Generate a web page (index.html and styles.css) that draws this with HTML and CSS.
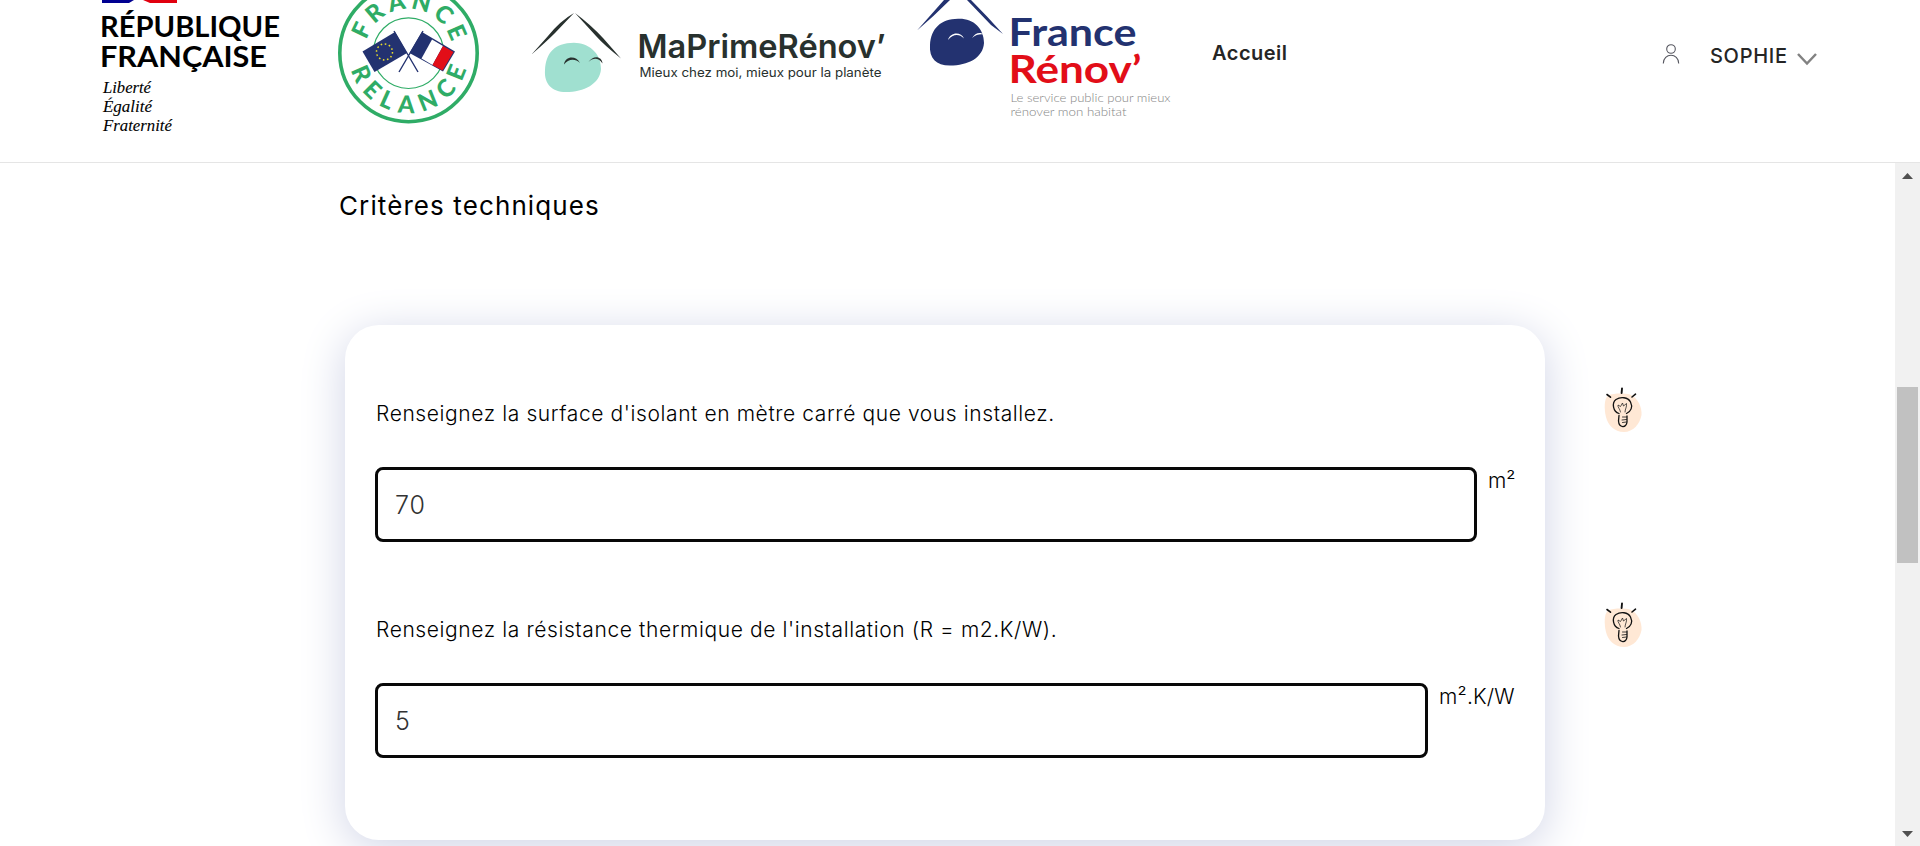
FILE: index.html
```html
<!DOCTYPE html>
<html lang="fr">
<head>
<meta charset="utf-8">
<title>MaPrimeRénov’ – Critères techniques</title>
<link rel="stylesheet" href="styles.css">
</head>
<body>
<header class="header">
  <svg class="logos" width="1180" height="162" viewBox="0 0 1180 162">
    <!-- République française -->
    <path d="M102 0H134L129 3H102Z" fill="#000091"/>
    <path d="M143 0H177V3H150Z" fill="#e1000f"/>
    <g class="marianne">
      <text x="100" y="37.300" textLength="180" lengthAdjust="spacingAndGlyphs">RÉPUBLIQUE</text>
      <text x="100" y="67" textLength="167" lengthAdjust="spacingAndGlyphs">FRANÇAISE</text>
    </g>
    <g class="motto">
      <text x="103" y="93" textLength="48" lengthAdjust="spacingAndGlyphs">Liberté</text>
      <text x="103" y="112" textLength="49" lengthAdjust="spacingAndGlyphs">Égalité</text>
      <text x="103" y="130.500" textLength="69" lengthAdjust="spacingAndGlyphs">Fraternité</text>
    </g>
    <!-- France Relance -->
    <defs>
      <path id="arc-top" d="M364.500 53A44 44 0 0 1 452.500 53"/>
      <path id="arc-bottom" d="M348.500 53A60 60 0 0 0 468.500 53"/>
    </defs>
    <circle cx="408.500" cy="53" r="68.700" fill="none" stroke="#2fac66" stroke-width="3.600"/>
    <circle cx="408.500" cy="53.200" r="35.300" fill="none" stroke="#2fac66" stroke-width="1.200"/>
    <g class="relance">
      <text><textPath href="#arc-top" startOffset="13" textLength="114">FRANCE</textPath></text>
      <text><textPath href="#arc-bottom" startOffset="17" textLength="155">RELANCE</textPath></text>
    </g>
    <path d="M394 31L418 72M423 31L399 72" stroke="#233270" stroke-width="1.400"/>
    <path d="M362.500 51.500L395 32L407 53L374.500 72Z" fill="#233270"/>
    <circle cx="384.500" cy="52" r="8" fill="none" stroke="#e8dc2c" stroke-width="1.500" stroke-dasharray="1.600 2.590"/>
    <path d="M422 32L455 51.500L443 71.500L409.500 53Z" fill="#233270"/>
    <path d="M432 39.500L443 46L432.500 65L421.500 58.500Z" fill="#fff"/>
    <path d="M443 46L453.500 52L442.500 70.500L432.500 65Z" fill="#e20e18"/>
    <!-- MaPrimeRénov' -->
    <path d="M574 13Q560 21 548 36L531.500 54.500Q546 42 555 33Z" fill="#28312e"/>
    <path d="M575 13Q591 25 603 38L621 58.500Q604 45 596 36Z" fill="#28312e"/>
    <path d="M574 42.700C588 43 601 52 601 69C600 84 584 92 566 92C552 92 544 84 545 70C546 53 554 43 574 42.700Z" fill="#a0e0d0"/>
    <path d="M564 64.500C565 56 576 55 580 63C575 58 568 59 564 64.500ZM588.500 62C593 55 602 56 602.500 63.500C598 57 593 58 588.500 62Z" fill="#28312e"/>
    <text class="prime" x="637.500" y="58" textLength="248" lengthAdjust="spacingAndGlyphs">MaPrimeRénov’</text>
    <text class="prime-tag" x="639.500" y="77" textLength="242" lengthAdjust="spacingAndGlyphs">Mieux chez moi, mieux pour la planète</text>
    <!-- France Rénov' -->
    <path d="M944 0L917 30.500Q934 16 950 0ZM967 0L991 25L1003 34Q987 16 971 0Z" fill="#233270"/>
    <path d="M958 18.700C973 18 984 28 984 43C983 58 968 65.500 950 65.500C936 65.500 929 58 930 45C931 28 941 19 958 18.700Z" fill="#233270"/>
    <path d="M948 40C950 32 961 31 964 38.500C959 33.500 953 34 948 40ZM972 38C975 33 980 31.500 984 34.500C980 34 976 34.500 972 38Z" fill="#fff"/>
    <text class="renov" x="1008.500" y="46" fill="#233270" textLength="128" lengthAdjust="spacingAndGlyphs">France</text>
    <text class="renov" x="1008.500" y="83" fill="#e20e18" textLength="133" lengthAdjust="spacingAndGlyphs">Rénov’</text>
    <g class="renov-tag">
      <text x="1010.500" y="101.500" textLength="160" lengthAdjust="spacingAndGlyphs">Le service public pour mieux</text>
      <text x="1010.500" y="115.500" textLength="116" lengthAdjust="spacingAndGlyphs">rénover mon habitat</text>
    </g>
  </svg>
  <nav class="nav"><a class="nav-link">Accueil</a></nav>
  <div class="account">
    <svg class="user-icon" width="18" height="20" viewBox="0 0 18 20" fill="none" stroke="#55565f" stroke-width="1.100"><circle cx="9" cy="5" r="4.300"/><path d="M1.300 19.500C1.300 8.500 16.700 8.500 16.700 19.500"/></svg>
    <span class="user-name">SOPHIE</span>
    <svg class="chevron" width="20" height="13" viewBox="0 0 20 13" fill="none" stroke="#828282" stroke-width="2.500"><path d="M1 1L10 10.500L19 1"/></svg>
  </div>
</header>
<div class="viewport">
  <main class="content">
    <h1 class="title">Critères techniques</h1>
    <div class="row">
      <section class="card">
        <div class="field">
          <label class="label" for="area">Renseignez la surface d'isolant en mètre carré que vous installez.</label>
          <div class="control"><input class="input" id="area" value="70"><span class="unit unit-area">m²</span></div>
        </div>
        <div class="field">
          <label class="label" for="res">Renseignez la résistance thermique de l'installation (R = m2.K/W).</label>
          <div class="control"><input class="input" id="res" value="5"><span class="unit unit-res">m².K/W</span></div>
        </div>
      </section>
      <aside class="hints">
        <svg class="hint" width="40" height="48" viewBox="0 0 40 48"><use href="#bulb"/></svg>
        <svg class="hint" width="40" height="48" viewBox="0 0 40 48"><use href="#bulb"/></svg>
      </aside>
    </div>
  </main>
  <div class="scrollbar">
    <svg width="11" height="6" viewBox="0 0 11 6"><path d="M0 6L5.500 0L11 6Z" fill="#505050"/></svg>
    <div class="track"><div class="thumb"></div></div>
    <svg width="11" height="6" viewBox="0 0 11 6"><path d="M0 0H11L5.500 6Z" fill="#505050"/></svg>
  </div>
</div>
<svg class="sprite" width="0" height="0">
  <symbol id="bulb" viewBox="0 0 40 48">
    <path d="M4 8.500C10 6 20 6 26 7.500C34 11 38 20 37.500 28C36 37 29 45 20 45C10 45 4 38 2 30C0 22 0 12 4 8.500Z" fill="#ffe8d5"/>
    <g fill="none" stroke="#111" stroke-linecap="round">
      <path d="M18 1.500L17.600 6" stroke-width="1.900"/>
      <path d="M3 7.500L6.500 10.200M31.500 7.200L28 10" stroke-width="1.600"/>
      <path d="M15 26.500C9 24.500 7.500 16 12 12.500C16.500 9.500 24 10 26.500 15C29 20 27 24.500 22.500 26.500" stroke-width="1.300"/>
      <path d="M16.500 25C16 21.500 13.500 20.500 14 18L16.500 19.500L18.500 16L19.500 19L22.500 16.500C23 20 21 22 21 25" stroke-width=".7"/>
      <path d="M15 28.500L14.500 34C15 41 22.500 41.500 23 35L23 29" stroke-width="1.300"/>
      <path d="M18.500 30H22.500M18 33L22.500 32.500M18.500 35.500L22.500 35" stroke-width=".8"/>
    </g>
  </symbol>
</svg>
</body>
</html>
```
FILE: styles.css
```css
* { box-sizing: border-box; }
body {
  margin: 0;
  height: 846px;
  overflow: hidden;
  background: #fff;
  color: #000;
  font-family: Inter, "Liberation Sans", sans-serif;
  display: flex;
  flex-direction: column;
}
.header {
  height: 163px;
  flex: none;
  display: flex;
  border-bottom: 1px solid #e5e5e5;
}
.logos { flex: none; }
.marianne { font: 700 29px Lato, sans-serif; fill: #000; }
.motto { font: italic 17px "Liberation Serif", serif; fill: #000; stroke: #000; stroke-width: .1px; }
.relance { font: 900 24px Lato, sans-serif; fill: #2fac66; }
.prime { font: 600 32px Inter, sans-serif; fill: #28312e; }
.prime-tag { font: 400 12.500px Inter, sans-serif; fill: #28312e; }
.renov { font: 700 38px Lato, sans-serif; }
.renov-tag { font: 300 12.500px Lato, sans-serif; fill: #858585; }
.nav { padding: 40px 0 0 32px; width: 482px; }
.nav-link {
  font-size: 20px;
  line-height: 26px;
  font-weight: 600;
  letter-spacing: .5px;
  color: #252525;
}
.account { display: flex; align-items: flex-start; padding-top: 44px; }
.user-icon { margin-right: 30px; }
.user-name { font-size: 20px; line-height: 24px; font-weight: 500; letter-spacing: .7px; color: #252525; width: 87px; white-space: nowrap; }
.chevron { margin-top: 9px; }
.viewport { flex: 1; display: flex; min-height: 0; }
.content { flex: 1; padding: 26px 0 0 340px; overflow: hidden; }
.title { margin: 0 0 0 -1px; font-size: 26px; line-height: 34px; font-weight: 400; letter-spacing: 1.1px; }
.row { display: flex; margin: 102px 0 0 5px; }
.card {
  width: 1200px;
  height: 515px;
  flex: none;
  padding: 72px 30px 0;
  border-radius: 34px;
  background: #fff;
  box-shadow: 0 8px 46px #cfd3e6;
}
.field { height: 216px; }
.label { display: block; height: 70px; padding-left: 1px; font-size: 21px; line-height: 33px; font-weight: 300; letter-spacing: .6px; white-space: nowrap; }
.control { display: flex; gap: 11px; }
.input {
  flex: 1;
  min-width: 0;
  height: 75px;
  padding: 0 17px;
  border: 3px solid #080808;
  border-radius: 8px;
  background: #fff;
  color: #333;
  font: 300 25px Inter, sans-serif;
  letter-spacing: 1px;
  outline: 0;
}
.unit { flex: none; font-size: 21px; line-height: 27px; font-weight: 300; white-space: nowrap; }
.unit-area { width: 27px; }
.unit-res { width: 76px; letter-spacing: .2px; }
.hints { display: flex; flex-direction: column; gap: 167px; padding: 62px 0 0 59px; }
.hint { display: block; }
.scrollbar {
  width: 25px;
  background: #f1f1f1;
  display: flex;
  flex-direction: column;
  align-items: center;
  padding: 10px 0 9px;
}
.track { flex: 1; width: 21px; padding-top: 208px; }
.thumb { height: 176px; background: #c1c1c1; }
.sprite { position: absolute; }
```
